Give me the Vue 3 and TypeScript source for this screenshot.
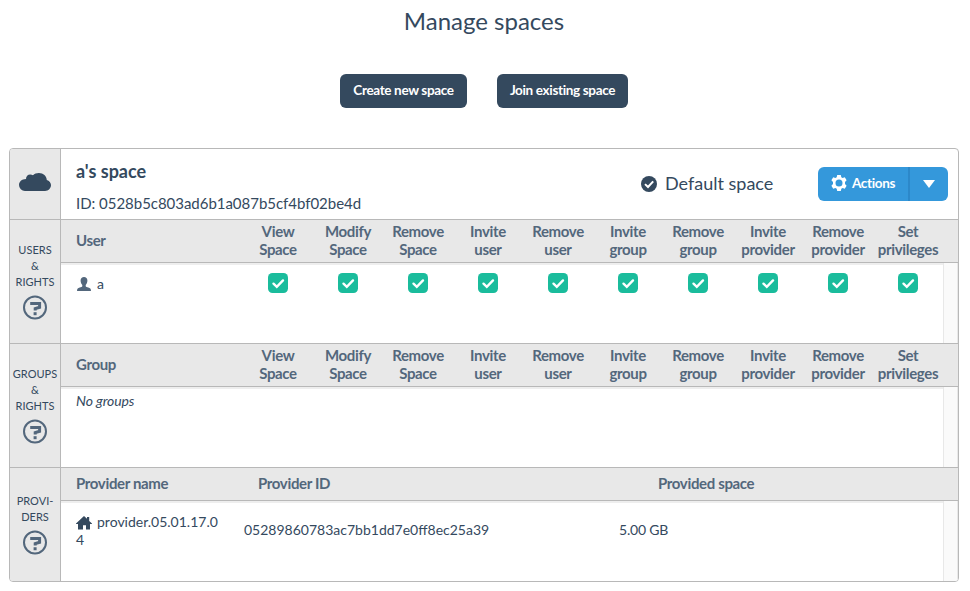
<script setup lang="ts">
interface Section {
  key: string
  rail: string[]
  title: string
}

const privileges: [string, string][] = [
  ['View', 'Space'],
  ['Modify', 'Space'],
  ['Remove', 'Space'],
  ['Invite', 'user'],
  ['Remove', 'user'],
  ['Invite', 'group'],
  ['Remove', 'group'],
  ['Invite', 'provider'],
  ['Remove', 'provider'],
  ['Set', 'privileges'],
]

const sections: Section[] = [
  { key: 'users', rail: ['USERS', '&', 'RIGHTS'], title: 'User' },
  { key: 'groups', rail: ['GROUPS', '&', 'RIGHTS'], title: 'Group' },
  { key: 'providers', rail: ['PROVI-', 'DERS'], title: 'Provider name' },
]
</script>

<template>
  <main class="page">
    <h1 class="title">Manage spaces</h1>
    <div class="toolbar">
      <button class="btn create">Create new space</button>
      <button class="btn join">Join existing space</button>
    </div>

    <section class="panel">
      <div class="row summary">
        <div class="rail">
          <svg class="cloud" width="32" height="18" viewBox="0 0 32 18">
            <path d="M6 18a6 6 0 0 1-6-6c0-3.200 2.700-5.800 7-5.900C6.900 3.300 8.800 1.400 11.200 1.400c1.100 0 2 .3 2.800.9C15.400.8 17.500 0 19.900 0c4.500 0 7.700 2.900 7.900 6.900 2.500.7 4.200 2.700 4.200 5.200 0 3.300-2.600 5.900-6 5.900z" />
          </svg>
        </div>
        <div class="info">
          <div class="names">
            <h2 class="name">a's space</h2>
            <p class="ident">ID: 0528b5c803ad6b1a087b5cf4bf02be4d</p>
          </div>
          <div class="default">
            <svg width="16" height="16" viewBox="0 0 16 16">
              <circle cx="8" cy="8" r="8" />
              <path class="tick" d="M4 8.100l3 2.900 5.200-5.700" />
            </svg>
            <span>Default space</span>
          </div>
          <div class="actions">
            <button class="act-main">
              <svg width="16" height="16" viewBox="0 0 16 16">
                <path fill-rule="evenodd" d="M6.200 0h3.600l.5 2.200 1.300.75 2.200-.7 1.800 3.100L14 7v2l1.600 1.650-1.800 3.100-2.200-.7-1.300.75-.5 2.200H6.200l-.5-2.200-1.300-.75-2.200.7-1.800-3.100L2 9V7L.4 5.350l1.800-3.100 2.200.7 1.300-.75zM8 4.500a3.500 3.500 0 1 0 0 7 3.500 3.500 0 0 0 0-7z" />
              </svg>
              <span>Actions</span>
            </button>
            <button class="act-more" aria-label="More">
              <svg width="12" height="8" viewBox="0 0 12 8"><path d="M0 0h12L6 8z" /></svg>
            </button>
          </div>
        </div>
      </div>

      <div v-for="s in sections" :key="s.key" class="row" :class="s.key">
        <div class="rail">
          <span v-for="line in s.rail" :key="line" class="rail-text">{{ line }}</span>
          <svg class="help" width="24" height="25" viewBox="0 0 24 25">
            <circle cx="12" cy="12.500" r="11" />
            <path d="M7.200 8.400H16.600V12.300L12.200 13.600V15.600" />
            <path d="M12.100 17.200v3" />
          </svg>
        </div>
        <div class="content">
          <div class="head">
            <div class="first">{{ s.title }}</div>
            <template v-if="s.key !== 'providers'">
              <div v-for="(p, i) in privileges" :key="i" class="priv">{{ p[0] }}<br />{{ p[1] }}</div>
            </template>
            <template v-else>
              <div class="head-id">Provider ID</div>
              <div class="head-size">Provided space</div>
            </template>
          </div>
          <div class="scroller">
            <div class="body">
              <template v-if="s.key === 'users'">
                <div class="first user">
                  <svg width="14" height="14" viewBox="0 0 14 14">
                    <path d="M7 0c2 0 3.400 1.300 3.400 3.600 0 1.700-.6 3.400-1.700 4.300v1.300c.3.700 1.300 1 2.600 1.400 1.700.5 2.700 1.300 2.700 3.400H0c0-2.100 1-2.900 2.700-3.400 1.300-.4 2.300-.7 2.600-1.400V7.900C4.200 7 3.600 5.300 3.600 3.600 3.600 1.300 5 0 7 0z" />
                  </svg>
                  <span>a</span>
                </div>
                <div v-for="(p, i) in privileges" :key="i" class="check-cell">
                  <svg class="check" width="20" height="20" viewBox="0 0 20 20">
                    <rect width="20" height="20" rx="4.500" />
                    <path d="M5.500 10.700l3.300 3.200 6.200-6.500" />
                  </svg>
                </div>
              </template>
              <div v-else-if="s.key === 'groups'" class="empty">No groups</div>
              <template v-else>
                <div class="first provider">
                  <svg width="16" height="14" viewBox="0 0 16 14">
                    <path d="M8 0l3 2.800V1h2.200v3.900L16 7.600V8h-2v5.400h-4V9.300H7v4.100H2V8H0v-.4z" />
                  </svg>provider.05.01.17.04
                </div>
                <div class="cell-id">05289860783ac7bb1dd7e0ff8ec25a39</div>
                <div class="cell-size">5.00 GB</div>
              </template>
            </div>
            <div class="track"></div>
          </div>
        </div>
      </div>
    </section>
  </main>
</template>

<style>
body {
  margin: 0;
  background: #fff;
}
</style>

<style scoped>
* {
  box-sizing: border-box;
}
.page {
  height: 591px;
  padding: 6px 11px 0 9px;
  overflow: hidden;
  font-family: Lato, sans-serif;
  color: #34495e;
}
.title {
  margin: 0;
  text-align: center;
  font-size: 24px;
  font-weight: 400;
  line-height: 29px;
}
.toolbar {
  display: flex;
  justify-content: center;
  gap: 30px;
  margin-top: 39px;
}
button {
  padding: 0 0 2px;
  border: 0;
  font-family: inherit;
  color: #fff;
  cursor: pointer;
}
.btn {
  height: 34px;
  border-radius: 6px;
  background: #34495e;
  font-size: 13.5px;
  font-weight: 700;
  letter-spacing: -0.34px;
}
.create {
  width: 127px;
}
.join {
  width: 131px;
}
.panel {
  width: 950px;
  margin-top: 40px;
  border: 1px solid #b8b8b8;
  border-radius: 4px;
  overflow: hidden;
}
.row {
  display: flex;
  height: 124px;
  border-bottom: 1px solid #b8b8b8;
}
.row.summary {
  height: 71px;
}
.row.providers {
  height: 113px;
  border-bottom: 0;
}
.rail {
  display: flex;
  flex: none;
  flex-direction: column;
  align-items: center;
  width: 51px;
  padding-top: 22px;
  border-right: 1px solid #b8b8b8;
  background: #e8e8e8;
  font-size: 11px;
  line-height: 16px;
}
.providers .rail {
  padding-top: 25px;
}
.summary .rail {
  padding-top: 24px;
}
.cloud,
.default circle,
.provider svg {
  fill: #34495e;
}
.help {
  margin-top: 5px;
  fill: none;
  stroke: #53677c;
}
.help circle {
  stroke-width: 2;
}
.help path {
  stroke-width: 3;
}
.info {
  display: flex;
  flex: 1;
  align-items: center;
  padding: 0 10px 0 15px;
}
.names {
  width: 565px;
  padding-top: 3px;
}
.name {
  margin: 0 0 10px;
  font-size: 18px;
  font-weight: 700;
  line-height: 24px;
}
.ident {
  margin: 0;
  font-size: 15px;
  line-height: 20px;
  letter-spacing: -0.03px;
}
.default {
  display: flex;
  align-items: center;
  gap: 8px;
  width: 177px;
  font-size: 18px;
  line-height: 22px;
  white-space: nowrap;
}
.default span {
  padding-bottom: 2px;
}
.tick {
  fill: none;
  stroke: #fff;
  stroke-width: 2;
}
.actions {
  display: flex;
  height: 34px;
  border-radius: 6px;
  overflow: hidden;
}
.actions button {
  display: flex;
  align-items: center;
  justify-content: center;
  background: #3498db;
  font-size: 13.5px;
  font-weight: 700;
}
.actions svg {
  fill: #fff;
}
.act-main {
  gap: 5px;
  width: 90px;
  letter-spacing: -0.34px;
}
.actions .act-more {
  width: 40px;
  padding: 0;
  border-left: 2px solid #2c88c9;
}
.content {
  display: flex;
  flex: 1;
  flex-direction: column;
}
.head {
  display: flex;
  align-items: center;
  height: 43px;
  padding-bottom: 2px;
  border-bottom: 1px solid #b8b8b8;
  background: #e8e8e8;
  color: #53677c;
  font-size: 15px;
  font-weight: 700;
  line-height: 18px;
  letter-spacing: -0.35px;
}
.providers .head {
  height: 33px;
}
.first {
  flex: none;
  width: 182px;
  padding-left: 15px;
}
.priv {
  width: 70px;
  text-align: center;
}
.head-id {
  width: 400px;
  padding-left: 15px;
}
.head-size {
  padding-left: 15px;
}
.scroller {
  display: flex;
  flex: 1;
}
.body {
  display: flex;
  align-items: flex-start;
  width: 882px;
  border-top: 2px solid #eee;
  font-size: 14px;
  line-height: 18px;
}
.track {
  width: 15px;
  border: 1px solid #e8e8e8;
  border-width: 0 1px;
  background: #fafafa;
}
.user {
  display: flex;
  align-items: center;
  gap: 6px;
  padding-top: 10px;
}
.user svg {
  margin-left: 1px;
  fill: #53677c;
}
.check-cell {
  display: flex;
  justify-content: center;
  width: 70px;
  padding-top: 8px;
}
.check rect {
  fill: #1abc9c;
}
.check path {
  fill: none;
  stroke: #fff;
  stroke-width: 2.400;
  stroke-linecap: round;
}
.empty {
  padding: 3px 15px;
  font-style: italic;
  letter-spacing: -0.1px;
}
.provider {
  padding: 10px 24px 0 15px;
  word-break: break-all;
}
.provider svg {
  margin-right: 5px;
  vertical-align: -3px;
}
.cell-id {
  width: 375px;
  padding: 18px 0 0 1px;
}
.cell-size {
  padding: 18px 0 0 1px;
  letter-spacing: -0.2px;
}
</style>
